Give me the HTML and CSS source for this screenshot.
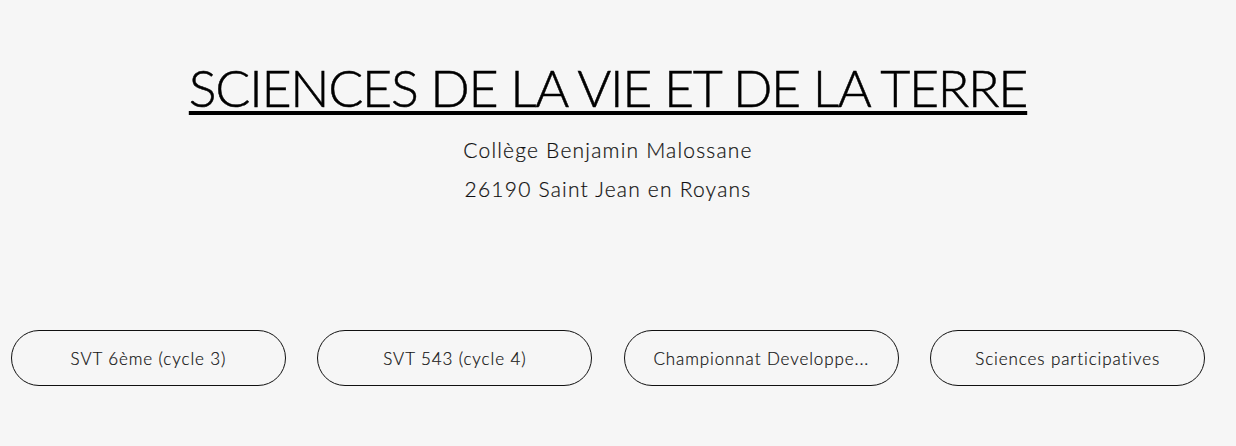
FILE: index.html
```html
<!DOCTYPE html>
<html lang="fr">
<head>
<meta charset="utf-8">
<title>SVT</title>
<link rel="stylesheet" href="styles.css">
</head>
<body>
<div class="page">
  <header class="header">
    <h1 class="title">SCIENCES DE LA VIE ET DE LA TERRE</h1>
    <p class="sub">Collège Benjamin Malossane</p>
    <p class="sub">26190 Saint Jean en Royans</p>
  </header>
  <nav class="nav">
    <a class="pill" href="#">SVT 6ème (cycle 3)</a>
    <a class="pill" href="#">SVT 543 (cycle 4)</a>
    <a class="pill" href="#">Championnat Developpe...</a>
    <a class="pill" href="#">Sciences participatives</a>
  </nav>
</div>
</body>
</html>
```
FILE: styles.css
```css
html, body {
  margin: 0;
  padding: 0;
  background: #f6f6f6;
}
.page {
  width: 1216px;
  padding-top: 57px;
  font-family: "Lato", "Open Sans", sans-serif;
  color: #111;
}
.header {
  display: flex;
  flex-direction: column;
  align-items: center;
}
.title {
  margin: 0;
  font-family: "Lato", sans-serif;
  font-weight: 300;
  font-size: 52px;
  line-height: 60px;
  color: #000;
  text-decoration: underline;
  text-decoration-thickness: 4px;
  text-underline-offset: 4px;
  letter-spacing: -1.3px;
  -webkit-text-stroke: 0.5px #000;
}
.sub {
  margin: 0;
  font-size: 21px;
  line-height: 39px;
  font-weight: 300;
  letter-spacing: 1.2px;
  color: #111;
  -webkit-text-stroke: 0.2px #111;
}
.sub:first-of-type {
  margin-top: 13px;
}
.nav {
  display: flex;
  gap: 31.4px;
  padding: 122px 0 0 11px;
}
.pill {
  width: 275px;
  height: 56px;
  box-sizing: border-box;
  border: 1px solid #111;
  border-radius: 28px;
  display: flex;
  align-items: center;
  justify-content: center;
  font-size: 17px;
  font-weight: 300;
  letter-spacing: 0.9px;
  color: #111;
  text-decoration: none;
  -webkit-text-stroke: 0.2px #111;
}
```
